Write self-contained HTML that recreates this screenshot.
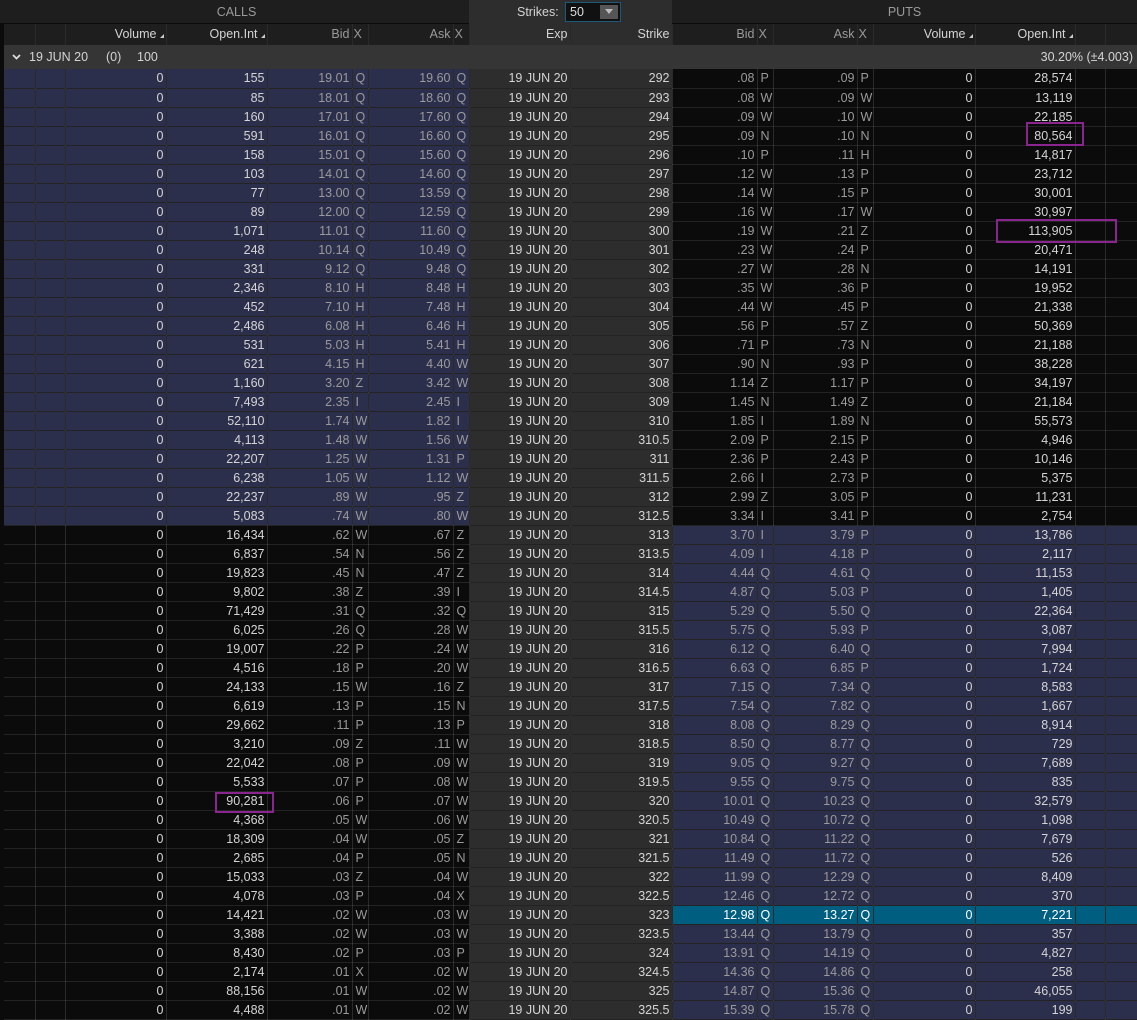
<!DOCTYPE html>
<html><head><meta charset="utf-8"><style>
*{margin:0;padding:0;box-sizing:border-box}
body{width:1137px;height:1018px;background:#0b0b0b;font-family:"Liberation Sans",sans-serif;font-size:12.5px;color:#d4d4d4;overflow:hidden;position:relative}
.top{position:absolute;left:0;top:0;width:1137px;height:24px;background:#1e1e1e;border-bottom:1px solid #0b0b0b}
.top div{position:absolute;top:0;height:24px;line-height:24px;color:#9a9a9a;text-align:center}
.exrow{position:absolute;left:4px;top:45px;width:1133px;height:24px;background:#353535;line-height:24px}
table{position:absolute;left:4px;top:69px;width:1133px;border-collapse:collapse;table-layout:fixed}
td{height:19px;line-height:18px;padding:0 2px 0 0;text-align:right;white-space:nowrap;overflow:hidden;border-right:1px solid rgba(255,255,255,.13);border-bottom:1px solid rgba(255,255,255,.1);background:#0b0b0b}
td:nth-child(5),td:nth-child(7),td:nth-child(11),td:nth-child(13){color:#9a9a9a}
td:nth-child(6),td:nth-child(8),td:nth-child(12),td:nth-child(14){text-align:left;padding:0 0 0 3px;color:#9a9a9a}
td:nth-child(9),td:nth-child(10){background:#2d2d2d}
tr.a td:nth-child(-n+8){background:#2c2f4c}
tr.b td:nth-child(n+11){background:#2c2f4c}
tr.h td:nth-child(n+11){background:#005f80;color:#fff}
.hd td{background:#1e1e1e;height:21px;line-height:21px;border-bottom:none;color:#d4d4d4}
.hd td:nth-child(9),.hd td:nth-child(10){background:#2d2d2d}
.hd td:nth-child(6),.hd td:nth-child(8),.hd td:nth-child(12),.hd td:nth-child(14){padding:0 0 0 1px}
.box{position:absolute;border:2px solid #8a2590}
.tri{display:inline-block;width:0;height:0;border-left:4px solid transparent;border-bottom:4px solid #ccc;margin-left:3px}
</style></head><body>
<div class="top">
<div style="left:4px;width:465px">CALLS</div>
<div style="left:469px;width:203px;background:#2d2d2d;color:#d4d4d4;text-align:left"><span style="position:absolute;left:48px">Strikes:</span><span style="position:absolute;left:96px;top:2px;width:56px;height:20px;border:1px solid #1d5a7a;background:#111;line-height:18px;text-align:left;padding-left:4px;color:#ddd">50<span style="position:absolute;right:2px;top:2px;width:18px;height:14px;background:#555"><span style="position:absolute;left:5px;top:4px;border-left:4px solid transparent;border-right:4px solid transparent;border-top:5px solid #bbb"></span></span></span></div>
<div style="left:672px;width:465px">PUTS</div>
</div>
<div class="exrow"><svg style="position:absolute;left:8px;top:9px" width="9" height="6" viewBox="0 0 9 6"><path d="M1 1 L4.5 4.5 L8 1" stroke="#ddd" stroke-width="1.8" fill="none"/></svg><span style="position:absolute;left:25px">19 JUN 20</span><span style="position:absolute;left:102px">(0)</span><span style="position:absolute;left:133px">100</span><span style="position:absolute;right:4px">30.20% (±4.003)</span></div>
<table style="top:24px"><colgroup><col style="width:31px"><col style="width:30px"><col style="width:101px"><col style="width:101px"><col style="width:85px"><col style="width:16px"><col style="width:85px"><col style="width:16px"><col style="width:101px"><col style="width:102px"><col style="width:85px"><col style="width:16px"><col style="width:84px"><col style="width:16px"><col style="width:102px"><col style="width:100px"><col style="width:30px"><col style="width:32px"></colgroup>
<tr class="hd"><td></td><td></td><td>Volume<span class="tri"></span></td><td>Open.Int<span class="tri"></span></td><td style="color:#9a9a9a">Bid</td><td style="color:#9a9a9a">X</td><td style="color:#9a9a9a">Ask</td><td style="color:#9a9a9a">X</td><td>Exp</td><td>Strike</td><td style="color:#9a9a9a">Bid</td><td style="color:#9a9a9a">X</td><td style="color:#9a9a9a">Ask</td><td style="color:#9a9a9a">X</td><td>Volume<span class="tri"></span></td><td>Open.Int<span class="tri"></span></td><td></td><td></td></tr>
</table>
<table><colgroup><col style="width:31px"><col style="width:30px"><col style="width:101px"><col style="width:101px"><col style="width:85px"><col style="width:16px"><col style="width:85px"><col style="width:16px"><col style="width:101px"><col style="width:102px"><col style="width:85px"><col style="width:16px"><col style="width:84px"><col style="width:16px"><col style="width:102px"><col style="width:100px"><col style="width:30px"><col style="width:32px"></colgroup>
<tr class="a"><td></td><td></td><td>0</td><td>155</td><td>19.01</td><td>Q</td><td>19.60</td><td>Q</td><td>19 JUN 20</td><td>292</td><td>.08</td><td>P</td><td>.09</td><td>P</td><td>0</td><td>28,574</td><td></td><td></td></tr>
<tr class="a"><td></td><td></td><td>0</td><td>85</td><td>18.01</td><td>Q</td><td>18.60</td><td>Q</td><td>19 JUN 20</td><td>293</td><td>.08</td><td>W</td><td>.09</td><td>W</td><td>0</td><td>13,119</td><td></td><td></td></tr>
<tr class="a"><td></td><td></td><td>0</td><td>160</td><td>17.01</td><td>Q</td><td>17.60</td><td>Q</td><td>19 JUN 20</td><td>294</td><td>.09</td><td>W</td><td>.10</td><td>W</td><td>0</td><td>22,185</td><td></td><td></td></tr>
<tr class="a"><td></td><td></td><td>0</td><td>591</td><td>16.01</td><td>Q</td><td>16.60</td><td>Q</td><td>19 JUN 20</td><td>295</td><td>.09</td><td>N</td><td>.10</td><td>N</td><td>0</td><td>80,564</td><td></td><td></td></tr>
<tr class="a"><td></td><td></td><td>0</td><td>158</td><td>15.01</td><td>Q</td><td>15.60</td><td>Q</td><td>19 JUN 20</td><td>296</td><td>.10</td><td>P</td><td>.11</td><td>H</td><td>0</td><td>14,817</td><td></td><td></td></tr>
<tr class="a"><td></td><td></td><td>0</td><td>103</td><td>14.01</td><td>Q</td><td>14.60</td><td>Q</td><td>19 JUN 20</td><td>297</td><td>.12</td><td>W</td><td>.13</td><td>P</td><td>0</td><td>23,712</td><td></td><td></td></tr>
<tr class="a"><td></td><td></td><td>0</td><td>77</td><td>13.00</td><td>Q</td><td>13.59</td><td>Q</td><td>19 JUN 20</td><td>298</td><td>.14</td><td>W</td><td>.15</td><td>P</td><td>0</td><td>30,001</td><td></td><td></td></tr>
<tr class="a"><td></td><td></td><td>0</td><td>89</td><td>12.00</td><td>Q</td><td>12.59</td><td>Q</td><td>19 JUN 20</td><td>299</td><td>.16</td><td>W</td><td>.17</td><td>W</td><td>0</td><td>30,997</td><td></td><td></td></tr>
<tr class="a"><td></td><td></td><td>0</td><td>1,071</td><td>11.01</td><td>Q</td><td>11.60</td><td>Q</td><td>19 JUN 20</td><td>300</td><td>.19</td><td>W</td><td>.21</td><td>Z</td><td>0</td><td>113,905</td><td></td><td></td></tr>
<tr class="a"><td></td><td></td><td>0</td><td>248</td><td>10.14</td><td>Q</td><td>10.49</td><td>Q</td><td>19 JUN 20</td><td>301</td><td>.23</td><td>W</td><td>.24</td><td>P</td><td>0</td><td>20,471</td><td></td><td></td></tr>
<tr class="a"><td></td><td></td><td>0</td><td>331</td><td>9.12</td><td>Q</td><td>9.48</td><td>Q</td><td>19 JUN 20</td><td>302</td><td>.27</td><td>W</td><td>.28</td><td>N</td><td>0</td><td>14,191</td><td></td><td></td></tr>
<tr class="a"><td></td><td></td><td>0</td><td>2,346</td><td>8.10</td><td>H</td><td>8.48</td><td>H</td><td>19 JUN 20</td><td>303</td><td>.35</td><td>W</td><td>.36</td><td>P</td><td>0</td><td>19,952</td><td></td><td></td></tr>
<tr class="a"><td></td><td></td><td>0</td><td>452</td><td>7.10</td><td>H</td><td>7.48</td><td>H</td><td>19 JUN 20</td><td>304</td><td>.44</td><td>W</td><td>.45</td><td>P</td><td>0</td><td>21,338</td><td></td><td></td></tr>
<tr class="a"><td></td><td></td><td>0</td><td>2,486</td><td>6.08</td><td>H</td><td>6.46</td><td>H</td><td>19 JUN 20</td><td>305</td><td>.56</td><td>P</td><td>.57</td><td>Z</td><td>0</td><td>50,369</td><td></td><td></td></tr>
<tr class="a"><td></td><td></td><td>0</td><td>531</td><td>5.03</td><td>H</td><td>5.41</td><td>H</td><td>19 JUN 20</td><td>306</td><td>.71</td><td>P</td><td>.73</td><td>N</td><td>0</td><td>21,188</td><td></td><td></td></tr>
<tr class="a"><td></td><td></td><td>0</td><td>621</td><td>4.15</td><td>H</td><td>4.40</td><td>W</td><td>19 JUN 20</td><td>307</td><td>.90</td><td>N</td><td>.93</td><td>P</td><td>0</td><td>38,228</td><td></td><td></td></tr>
<tr class="a"><td></td><td></td><td>0</td><td>1,160</td><td>3.20</td><td>Z</td><td>3.42</td><td>W</td><td>19 JUN 20</td><td>308</td><td>1.14</td><td>Z</td><td>1.17</td><td>P</td><td>0</td><td>34,197</td><td></td><td></td></tr>
<tr class="a"><td></td><td></td><td>0</td><td>7,493</td><td>2.35</td><td>I</td><td>2.45</td><td>I</td><td>19 JUN 20</td><td>309</td><td>1.45</td><td>N</td><td>1.49</td><td>Z</td><td>0</td><td>21,184</td><td></td><td></td></tr>
<tr class="a"><td></td><td></td><td>0</td><td>52,110</td><td>1.74</td><td>W</td><td>1.82</td><td>I</td><td>19 JUN 20</td><td>310</td><td>1.85</td><td>I</td><td>1.89</td><td>N</td><td>0</td><td>55,573</td><td></td><td></td></tr>
<tr class="a"><td></td><td></td><td>0</td><td>4,113</td><td>1.48</td><td>W</td><td>1.56</td><td>W</td><td>19 JUN 20</td><td>310.5</td><td>2.09</td><td>P</td><td>2.15</td><td>P</td><td>0</td><td>4,946</td><td></td><td></td></tr>
<tr class="a"><td></td><td></td><td>0</td><td>22,207</td><td>1.25</td><td>W</td><td>1.31</td><td>P</td><td>19 JUN 20</td><td>311</td><td>2.36</td><td>P</td><td>2.43</td><td>P</td><td>0</td><td>10,146</td><td></td><td></td></tr>
<tr class="a"><td></td><td></td><td>0</td><td>6,238</td><td>1.05</td><td>W</td><td>1.12</td><td>W</td><td>19 JUN 20</td><td>311.5</td><td>2.66</td><td>I</td><td>2.73</td><td>P</td><td>0</td><td>5,375</td><td></td><td></td></tr>
<tr class="a"><td></td><td></td><td>0</td><td>22,237</td><td>.89</td><td>W</td><td>.95</td><td>Z</td><td>19 JUN 20</td><td>312</td><td>2.99</td><td>Z</td><td>3.05</td><td>P</td><td>0</td><td>11,231</td><td></td><td></td></tr>
<tr class="a"><td></td><td></td><td>0</td><td>5,083</td><td>.74</td><td>W</td><td>.80</td><td>W</td><td>19 JUN 20</td><td>312.5</td><td>3.34</td><td>I</td><td>3.41</td><td>P</td><td>0</td><td>2,754</td><td></td><td></td></tr>
<tr class="b"><td></td><td></td><td>0</td><td>16,434</td><td>.62</td><td>W</td><td>.67</td><td>Z</td><td>19 JUN 20</td><td>313</td><td>3.70</td><td>I</td><td>3.79</td><td>P</td><td>0</td><td>13,786</td><td></td><td></td></tr>
<tr class="b"><td></td><td></td><td>0</td><td>6,837</td><td>.54</td><td>N</td><td>.56</td><td>Z</td><td>19 JUN 20</td><td>313.5</td><td>4.09</td><td>I</td><td>4.18</td><td>P</td><td>0</td><td>2,117</td><td></td><td></td></tr>
<tr class="b"><td></td><td></td><td>0</td><td>19,823</td><td>.45</td><td>N</td><td>.47</td><td>Z</td><td>19 JUN 20</td><td>314</td><td>4.44</td><td>Q</td><td>4.61</td><td>Q</td><td>0</td><td>11,153</td><td></td><td></td></tr>
<tr class="b"><td></td><td></td><td>0</td><td>9,802</td><td>.38</td><td>Z</td><td>.39</td><td>I</td><td>19 JUN 20</td><td>314.5</td><td>4.87</td><td>Q</td><td>5.03</td><td>P</td><td>0</td><td>1,405</td><td></td><td></td></tr>
<tr class="b"><td></td><td></td><td>0</td><td>71,429</td><td>.31</td><td>Q</td><td>.32</td><td>Q</td><td>19 JUN 20</td><td>315</td><td>5.29</td><td>Q</td><td>5.50</td><td>Q</td><td>0</td><td>22,364</td><td></td><td></td></tr>
<tr class="b"><td></td><td></td><td>0</td><td>6,025</td><td>.26</td><td>Q</td><td>.28</td><td>W</td><td>19 JUN 20</td><td>315.5</td><td>5.75</td><td>Q</td><td>5.93</td><td>P</td><td>0</td><td>3,087</td><td></td><td></td></tr>
<tr class="b"><td></td><td></td><td>0</td><td>19,007</td><td>.22</td><td>P</td><td>.24</td><td>W</td><td>19 JUN 20</td><td>316</td><td>6.12</td><td>Q</td><td>6.40</td><td>Q</td><td>0</td><td>7,994</td><td></td><td></td></tr>
<tr class="b"><td></td><td></td><td>0</td><td>4,516</td><td>.18</td><td>P</td><td>.20</td><td>W</td><td>19 JUN 20</td><td>316.5</td><td>6.63</td><td>Q</td><td>6.85</td><td>P</td><td>0</td><td>1,724</td><td></td><td></td></tr>
<tr class="b"><td></td><td></td><td>0</td><td>24,133</td><td>.15</td><td>W</td><td>.16</td><td>Z</td><td>19 JUN 20</td><td>317</td><td>7.15</td><td>Q</td><td>7.34</td><td>Q</td><td>0</td><td>8,583</td><td></td><td></td></tr>
<tr class="b"><td></td><td></td><td>0</td><td>6,619</td><td>.13</td><td>P</td><td>.15</td><td>N</td><td>19 JUN 20</td><td>317.5</td><td>7.54</td><td>Q</td><td>7.82</td><td>Q</td><td>0</td><td>1,667</td><td></td><td></td></tr>
<tr class="b"><td></td><td></td><td>0</td><td>29,662</td><td>.11</td><td>P</td><td>.13</td><td>P</td><td>19 JUN 20</td><td>318</td><td>8.08</td><td>Q</td><td>8.29</td><td>Q</td><td>0</td><td>8,914</td><td></td><td></td></tr>
<tr class="b"><td></td><td></td><td>0</td><td>3,210</td><td>.09</td><td>Z</td><td>.11</td><td>W</td><td>19 JUN 20</td><td>318.5</td><td>8.50</td><td>Q</td><td>8.77</td><td>Q</td><td>0</td><td>729</td><td></td><td></td></tr>
<tr class="b"><td></td><td></td><td>0</td><td>22,042</td><td>.08</td><td>P</td><td>.09</td><td>W</td><td>19 JUN 20</td><td>319</td><td>9.05</td><td>Q</td><td>9.27</td><td>Q</td><td>0</td><td>7,689</td><td></td><td></td></tr>
<tr class="b"><td></td><td></td><td>0</td><td>5,533</td><td>.07</td><td>P</td><td>.08</td><td>W</td><td>19 JUN 20</td><td>319.5</td><td>9.55</td><td>Q</td><td>9.75</td><td>Q</td><td>0</td><td>835</td><td></td><td></td></tr>
<tr class="b"><td></td><td></td><td>0</td><td>90,281</td><td>.06</td><td>P</td><td>.07</td><td>W</td><td>19 JUN 20</td><td>320</td><td>10.01</td><td>Q</td><td>10.23</td><td>Q</td><td>0</td><td>32,579</td><td></td><td></td></tr>
<tr class="b"><td></td><td></td><td>0</td><td>4,368</td><td>.05</td><td>W</td><td>.06</td><td>W</td><td>19 JUN 20</td><td>320.5</td><td>10.49</td><td>Q</td><td>10.72</td><td>Q</td><td>0</td><td>1,098</td><td></td><td></td></tr>
<tr class="b"><td></td><td></td><td>0</td><td>18,309</td><td>.04</td><td>W</td><td>.05</td><td>Z</td><td>19 JUN 20</td><td>321</td><td>10.84</td><td>Q</td><td>11.22</td><td>Q</td><td>0</td><td>7,679</td><td></td><td></td></tr>
<tr class="b"><td></td><td></td><td>0</td><td>2,685</td><td>.04</td><td>P</td><td>.05</td><td>N</td><td>19 JUN 20</td><td>321.5</td><td>11.49</td><td>Q</td><td>11.72</td><td>Q</td><td>0</td><td>526</td><td></td><td></td></tr>
<tr class="b"><td></td><td></td><td>0</td><td>15,033</td><td>.03</td><td>Z</td><td>.04</td><td>W</td><td>19 JUN 20</td><td>322</td><td>11.99</td><td>Q</td><td>12.29</td><td>Q</td><td>0</td><td>8,409</td><td></td><td></td></tr>
<tr class="b"><td></td><td></td><td>0</td><td>4,078</td><td>.03</td><td>P</td><td>.04</td><td>X</td><td>19 JUN 20</td><td>322.5</td><td>12.46</td><td>Q</td><td>12.72</td><td>Q</td><td>0</td><td>370</td><td></td><td></td></tr>
<tr class="b h"><td></td><td></td><td>0</td><td>14,421</td><td>.02</td><td>W</td><td>.03</td><td>W</td><td>19 JUN 20</td><td>323</td><td>12.98</td><td>Q</td><td>13.27</td><td>Q</td><td>0</td><td>7,221</td><td></td><td></td></tr>
<tr class="b"><td></td><td></td><td>0</td><td>3,388</td><td>.02</td><td>W</td><td>.03</td><td>W</td><td>19 JUN 20</td><td>323.5</td><td>13.44</td><td>Q</td><td>13.79</td><td>Q</td><td>0</td><td>357</td><td></td><td></td></tr>
<tr class="b"><td></td><td></td><td>0</td><td>8,430</td><td>.02</td><td>P</td><td>.03</td><td>P</td><td>19 JUN 20</td><td>324</td><td>13.91</td><td>Q</td><td>14.19</td><td>Q</td><td>0</td><td>4,827</td><td></td><td></td></tr>
<tr class="b"><td></td><td></td><td>0</td><td>2,174</td><td>.01</td><td>X</td><td>.02</td><td>W</td><td>19 JUN 20</td><td>324.5</td><td>14.36</td><td>Q</td><td>14.86</td><td>Q</td><td>0</td><td>258</td><td></td><td></td></tr>
<tr class="b"><td></td><td></td><td>0</td><td>88,156</td><td>.01</td><td>W</td><td>.02</td><td>W</td><td>19 JUN 20</td><td>325</td><td>14.87</td><td>Q</td><td>15.36</td><td>Q</td><td>0</td><td>46,055</td><td></td><td></td></tr>
<tr class="b"><td></td><td></td><td>0</td><td>4,488</td><td>.01</td><td>W</td><td>.02</td><td>W</td><td>19 JUN 20</td><td>325.5</td><td>15.39</td><td>Q</td><td>15.78</td><td>Q</td><td>0</td><td>199</td><td></td><td></td></tr>
</table>
<div class="box" style="left:1026px;top:122px;width:58px;height:24px"></div>
<div class="box" style="left:996px;top:219px;width:121px;height:24px"></div>
<div class="box" style="left:215px;top:792px;width:59px;height:21px"></div>
</body></html>
